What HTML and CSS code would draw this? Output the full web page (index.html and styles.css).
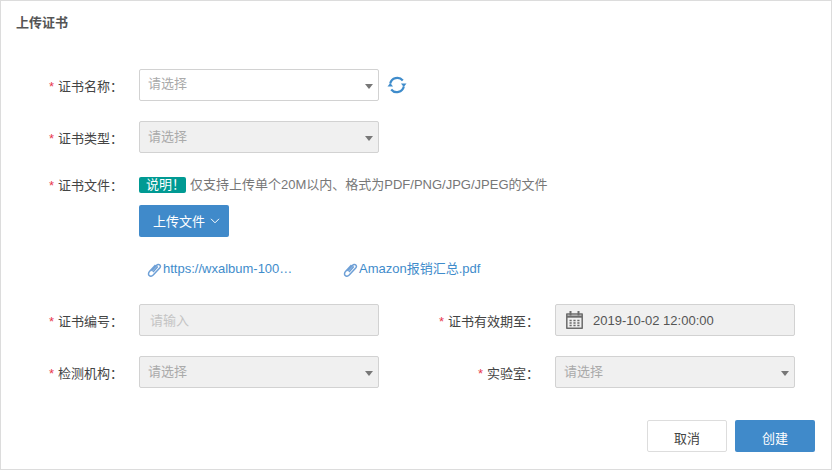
FILE: index.html
```html
<!DOCTYPE html>
<html lang="zh-CN">
<head>
<meta charset="utf-8">
<title>上传证书</title>
<link rel="stylesheet" href="styles.css">
</head>
<body>
<div class="dialog">
  <h1 class="title">上传证书</h1>
  <form class="form">
    <div class="row row-name">
      <div class="label"><i>*</i>证书名称：</div>
      <div class="select"><span class="ph">请选择</span><b class="caret"></b></div>
      <svg class="refresh" width="20" height="20" viewBox="0 0 20 20" fill="none" stroke="#3f8ccb" stroke-width="2.2">
        <path d="M3.200 8.500A7.200 7.200 0 0 1 15.800 5.500"/>
        <path d="M16.800 11.500A7.200 7.200 0 0 1 4.200 14.500"/>
        <path d="M14 8.500h5.500l-2.750 3.500z" fill="#3f8ccb" stroke="none"/>
        <path d="M.5 11.500h5.500l-2.750-3.500z" fill="#3f8ccb" stroke="none"/>
      </svg>
    </div>
    <div class="row row-type">
      <div class="label"><i>*</i>证书类型：</div>
      <div class="select off"><span class="ph">请选择</span><b class="caret"></b></div>
    </div>
    <div class="row row-file">
      <div class="label short"><i>*</i>证书文件：</div>
      <div class="file">
        <p class="note"><span class="tag">说明！</span>仅支持上传单个20M以内、格式为PDF/PNG/JPG/JPEG的文件</p>
        <button type="button" class="btn upload">上传文件
          <svg width="10" height="6" viewBox="0 0 10 6" fill="none" stroke="#fff" stroke-width="1"><path d="M1 .8l4 4 4-4"/></svg>
        </button>
        <div class="links">
          <a class="link first">
            <svg class="clip" width="15" height="15" viewBox="0 0 15 14" fill="none" stroke="#6d9fd6" stroke-width="1.500"><path d="M4.500 8.500l5-5.600c1-1.100 2.500-1.200 3.300-.4s.7 2.200-.3 3.300l-6.300 6.700c-1.300 1.300-3 1.400-4 .5s-.9-2.600.3-3.900l6-6.500M6 9.400l4.800-5.300"/></svg>https://wxalbum-100…</a>
          <a class="link">
            <svg class="clip" width="15" height="15" viewBox="0 0 15 14" fill="none" stroke="#6d9fd6" stroke-width="1.500"><path d="M4.500 8.500l5-5.600c1-1.100 2.500-1.200 3.300-.4s.7 2.200-.3 3.300l-6.300 6.700c-1.300 1.300-3 1.400-4 .5s-.9-2.600.3-3.900l6-6.500M6 9.400l4.800-5.300"/></svg>Amazon报销汇总.pdf</a>
        </div>
      </div>
    </div>
    <div class="row row-two">
      <div class="label"><i>*</i>证书编号：</div>
      <div class="select off input"><span class="ph light">请输入</span></div>
      <div class="label wide"><i>*</i>证书有效期至：</div>
      <div class="select off date">
        <svg width="20" height="20" viewBox="0 0 20 20" fill="none" stroke="#6b6b6b" stroke-width="1.500">
          <path d="M1.800 4h15.400v14.200H1.800z" stroke-linejoin="round"/>
          <path d="M5.500 1v4.500M13.500 1v4.500" stroke-width="2"/>
          <path d="M2 5.500h15v2.200H2z" fill="#6b6b6b" stroke="none"/>
          <path d="M4.500 10.500h2.200M8.400 10.500h2.200M12.300 10.500h2.200M4.500 13h2.200M8.400 13h2.200M12.300 13h2.200M4.500 15.500h2.200M8.400 15.500h2.200M12.300 15.500h2.200" stroke-width="1.500"/>
        </svg>
        <span class="value">2019-10-02 12:00:00</span>
      </div>
    </div>
    <div class="row row-lab">
      <div class="label"><i>*</i>检测机构：</div>
      <div class="select off"><span class="ph">请选择</span><b class="caret"></b></div>
      <div class="label wide"><i>*</i>实验室：</div>
      <div class="select off"><span class="ph">请选择</span><b class="caret"></b></div>
    </div>
    <div class="actions">
      <button type="button" class="btn cancel">取消</button>
      <button type="button" class="btn primary">创建</button>
    </div>
  </form>
</div>
</body>
</html>
```
FILE: styles.css
```css
* { box-sizing: border-box; }
html, body { margin: 0; padding: 0; }
body {
  width: 832px;
  height: 470px;
  background: #fff;
  color: #444;
  font-family: "Liberation Sans", "Noto Sans CJK SC", sans-serif;
  font-size: 13px;
  overflow: hidden;
}
.dialog {
  width: 832px;
  height: 470px;
  border: 1px solid #dcdcdc;
  padding: 13px 16px 0 0;
}
.title {
  margin: 0 0 0 15px;
  font-size: 13px;
  line-height: 18px;
  font-weight: 700;
  color: #555;
}
.form { display: flex; flex-direction: column; margin-top: 37px; }
.row { display: flex; align-items: flex-start; }
.row-type { margin-top: 20px; }
.row-file { margin-top: 24px; }
.row-two { margin-top: 25px; }
.row-lab { margin-top: 20px; }
.label {
  width: 138px;
  height: 32px;
  padding-right: 16px;
  text-align: right;
  line-height: 36px;
  color: #444;
  white-space: nowrap;
  flex: none;
}
.label.short { height: 16px; line-height: 17px; }
.label i {
  font-style: normal;
  color: #e8384f;
  margin-right: 4px;
}
.wide { width: 176px; padding-right: 16px; flex: none; }
.select {
  position: relative;
  width: 240px;
  height: 32px;
  flex: none;
  border: 1px solid #d2d2d2;
  border-radius: 2px;
  background: #fff;
  padding-left: 8px;
  line-height: 27px;
  display: flex;
  align-items: flex-start;
}
.off { background: #f0f0f0; line-height: 29px; }
.ph { color: #aaa; }
.light { color: #c4c4c4; }
.input { padding-left: 10px; line-height: 32px; }
.caret {
  position: absolute;
  right: 5px;
  top: 14px;
  width: 0;
  height: 0;
  border-left: 4.500px solid transparent;
  border-right: 4.500px solid transparent;
  border-top: 5px solid #777;
}
.refresh { margin: 6px 0 0 8px; flex: none; }
.file { display: flex; flex-direction: column; align-items: flex-start; }
.note {
  margin: 0;
  line-height: 16px;
  color: #777;
  height: 16px;
  white-space: nowrap;
  display: flex;
  align-items: center;
}
.tag {
  background: #009a93;
  color: #fff;
  border-radius: 2px;
  width: 47px;
  height: 16px;
  line-height: 16px;
  padding-left: 7px;
  margin-right: 4px;
  overflow: hidden;
}
.btn {
  font: inherit;
  border-radius: 2px;
  cursor: pointer;
  padding: 0;
}
.upload {
  width: 90px;
  height: 32px;
  margin-top: 12px;
  background: #408aca;
  border: 0;
  color: #fff;
  display: flex;
  align-items: center;
  justify-content: flex-start;
  gap: 5px;
  padding: 0 0 1px 14px;
}
.links { display: flex; margin: 22px 0 0 8px; }
.link {
  color: #3f8ccb;
  display: flex;
  align-items: center;
  line-height: 20px;
}
.link.first { width: 196px; }
.clip { flex: none; margin-right: 1px; }
.date { align-items: center; padding: 1px 0 0 9px; line-height: 30px; }
.date svg { margin-top: -1px; }
.value { margin-left: 8px; color: #555; }
.actions { display: flex; justify-content: flex-end; gap: 8px; margin-top: 32px; }
.cancel {
  width: 80px;
  height: 32px;
  background: #fff;
  border: 1px solid #ddd;
  color: #444;
  padding-top: 2px;
}
.primary {
  width: 80px;
  height: 32px;
  background: #408aca;
  border: 0;
  color: #fff;
  padding-top: 2px;
}
```
